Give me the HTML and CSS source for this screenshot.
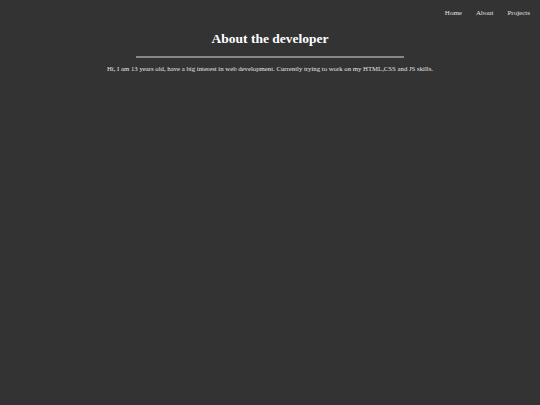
FILE: index.html
```html
<!DOCTYPE html>
<html>
<head>
<meta charset="utf-8">
<link rel="stylesheet" href="styles.css">
</head>
<body>
<nav class="nav">
  <a class="nav-link" href="#">Home</a>
  <a class="nav-link" href="#">About</a>
  <a class="nav-link" href="#">Projects</a>
</nav>
<main class="about">
  <h1 class="title">About the developer</h1>
  <hr class="rule">
  <p class="text">Hi, I am 13 years old, have a big interest in web development. Currently trying to work on my HTML,CSS and JS skills.</p>
</main>
</body>
</html>
```
FILE: styles.css
```css
html, body {
  margin: 0;
  padding: 0;
  background: #333333;
  height: 100%;
}
body {
  font-family: "Liberation Serif", "Times New Roman", serif;
  color: #ffffff;
}
.nav {
  display: flex;
  justify-content: flex-end;
  gap: 14px;
  padding: 8px 10px 0 0;
  height: 16px;
}
.nav-link {
  color: #e0e0e0;
  text-decoration: none;
  font-size: 7px;
  line-height: 10px;
}
.about {
  display: flex;
  flex-direction: column;
  align-items: center;
}
.title {
  margin: 6px 0 0;
  font-size: 13.5px;
  line-height: 18px;
  font-weight: bold;
}
.rule {
  width: 268px;
  height: 2px;
  border: 0;
  background: #888888;
  margin: 8px 0 0;
}
.text {
  margin: 6px 0 0;
  font-size: 6.75px;
  line-height: 9px;
  color: #e6e6e6;
}
```
